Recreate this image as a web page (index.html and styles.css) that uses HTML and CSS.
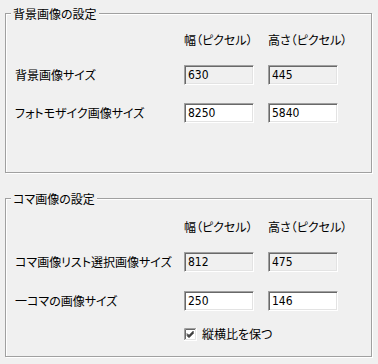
FILE: index.html
```html
<!DOCTYPE html>
<html lang="ja">
<head>
<meta charset="utf-8">
<link rel="stylesheet" href="styles.css">
</head>
<body>
<fieldset class="group g1">
  <legend class="title">背景画像の設定</legend>
  <div class="rows">
    <div class="row head"><span></span><span>幅（ピクセル）</span><span>高さ（ピクセル）</span></div>
    <div class="row field r1"><span class="label">背景画像サイズ</span><input class="num ro" type="text" value="630" readonly><input class="num ro" type="text" value="445" readonly></div>
    <div class="row field"><span class="label">フォトモザイク画像サイズ</span><input class="num" type="text" value="8250"><input class="num" type="text" value="5840"></div>
  </div>
</fieldset>
<fieldset class="group g2">
  <legend class="title">コマ画像の設定</legend>
  <div class="rows">
    <div class="row head"><span></span><span>幅（ピクセル）</span><span>高さ（ピクセル）</span></div>
    <div class="row field r1"><span class="label">コマ画像リスト選択画像サイズ</span><input class="num ro" type="text" value="812" readonly><input class="num ro" type="text" value="475" readonly></div>
    <div class="row field"><span class="label">一コマの画像サイズ</span><input class="num" type="text" value="250"><input class="num" type="text" value="146"></div>
    <div class="row check"><span></span>
      <label class="cb">
        <svg class="box" width="13" height="13" viewBox="0 0 13 13">
          <rect x="0" y="0" width="13" height="13" fill="#fff"/>
          <path d="M0.5 13V0.5H13" fill="none" stroke="#a0a0a0" stroke-width="1"/>
          <path d="M1.5 12V1.5H12" fill="none" stroke="#696969" stroke-width="1"/>
          <path d="M12.5 0V12.5H0" fill="none" stroke="#ffffff" stroke-width="1"/>
          <path d="M11.5 1V11.5H1" fill="none" stroke="#e3e3e3" stroke-width="1"/>
          <path d="M3 5.5L5 7.5L9.5 3" fill="none" stroke="#000" stroke-width="1"/>
          <path d="M3 6.5L5 8.5L9.5 4" fill="none" stroke="#000" stroke-width="1"/>
          <path d="M3 7.5L5 9.5L9.5 5" fill="none" stroke="#000" stroke-width="1"/>
        </svg>
        <span>縦横比を保つ</span>
      </label>
    </div>
  </div>
</fieldset>
</body>
</html>
```
FILE: styles.css
```css
html, body {
  margin: 0;
  padding: 0;
  background: #f0f0f0;
}
body {
  width: 378px;
  height: 364px;
  overflow: hidden;
  font-family: "Noto Sans CJK JP", "Noto Sans", sans-serif;
  font-size: 12px;
  color: #000;
  font-feature-settings: "palt";
}
.group {
  box-sizing: border-box;
  width: 367px;
  margin: 0 0 0 5px;
  padding: 0;
  border: 1px solid #a0a0a0;
  box-shadow: 1px 1px 0 #fff, inset 1px 1px 0 #fff;
  min-width: 0;
}
.g1 { margin-top: 6px; height: 167px; }
.g2 { margin-top: 18px; height: 166px; }
.title {
  margin-left: 5px;
  padding: 0 2px;
  height: 15px;
  line-height: 15px;
  background: #f0f0f0;
}
.rows {
  display: flex;
  flex-direction: column;
  padding-left: 9px;
}
.g1 .rows { padding-top: 12px; }
.g2 .rows { padding-top: 14px; }
.row {
  display: grid;
  grid-template-columns: 169px 84px 70px;
  align-items: center;
  white-space: nowrap;
}
.head { height: 14px; line-height: 14px; }
.field { height: 20px; margin-top: 18px; }
.g1 .r1 { margin-top: 18px; }
.g2 .r1 { margin-top: 18px; }
.g2 .field:not(.r1) { margin-top: 19px; }
.label { line-height: 14px; }
.num {
  box-sizing: border-box;
  width: 70px;
  height: 20px;
  margin: 0;
  padding: 0 0 0 3px;
  border: 1px solid;
  border-color: #a0a0a0 #fff #fff #a0a0a0;
  box-shadow: inset 1px 1px 0 #696969, inset -1px -1px 0 #e3e3e3;
  background: #fff;
  font-family: "Liberation Sans Narrow", "DejaVu Sans Condensed", "Liberation Sans", sans-serif;
  font-size: 12px;
  color: #000;
  outline: none;
}
.num.ro { background: #f0f0f0; }
.check { height: 13px; margin-top: 16px; }
.cb {
  display: flex;
  align-items: center;
  gap: 5px;
  line-height: 14px;
}
.box { display: block; flex: none; }
```
